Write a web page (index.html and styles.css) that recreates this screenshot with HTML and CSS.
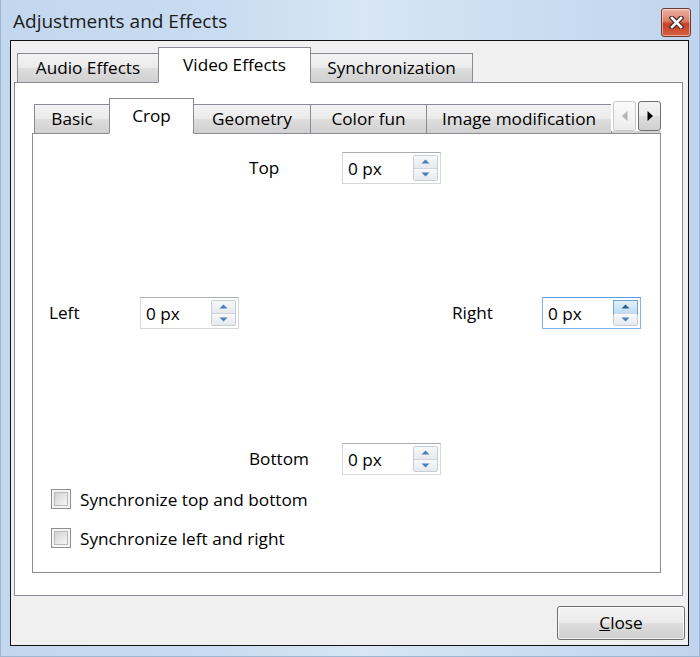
FILE: index.html
```html
<!DOCTYPE html>
<html>
<head>
<meta charset="utf-8">
<title>Adjustments and Effects</title>
<link rel="stylesheet" href="styles.css">
</head>
<body>
<div class="window">
  <div class="titlebar">
    <span class="title">Adjustments and Effects</span>
    <button class="close-x" aria-label="Close">
      <svg width="15" height="13" viewBox="0 0 15 13">
        <path d="M3 2 L12 11 M12 2 L3 11" stroke="#4a2a20" stroke-width="5" stroke-linecap="square"/>
        <path d="M3 2 L12 11 M12 2 L3 11" stroke="#ffffff" stroke-width="2.6" stroke-linecap="square"/>
      </svg>
    </button>
  </div>
  <div class="client">
    <div class="tabwidget outer">
      <div class="tabbar">
        <div class="tab t-audio">Audio Effects</div>
        <div class="tab t-video selected">Video Effects</div>
        <div class="tab t-sync">Synchronization</div>
      </div>
      <div class="pane outer-pane">
        <div class="tabwidget inner">
          <div class="tabbar inner-bar">
            <div class="tab t-basic">Basic</div>
            <div class="tab t-crop selected">Crop</div>
            <div class="tab t-geom">Geometry</div>
            <div class="tab t-color">Color fun</div>
            <div class="tab t-image">Image modification</div>
            <div class="tab t-overlay"></div>
            <div class="scrollers">
              <div class="scroll-btn disabled">
                <svg width="8" height="12" viewBox="0 0 8 12"><path d="M6.5 1 L1 6 L6.5 11 Z" fill="#b3b3b3"/></svg>
              </div>
              <div class="scroll-btn active">
                <svg width="8" height="12" viewBox="0 0 8 12"><path d="M1.5 1 L7 6 L1.5 11 Z" fill="#000"/></svg>
              </div>
            </div>
          </div>
          <div class="pane inner-pane">
            <div class="crop-grid">
              <span class="lbl lbl-top">Top</span>
              <div class="spin s-top">
                <span class="val">0 px</span>
                <div class="spin-btns">
                  <div class="sb up"><svg width="9" height="5" viewBox="0 0 9 5"><path d="M0.5 4.5 L4.5 0.5 L8.5 4.5 Z" fill="#4a7fb8"/></svg></div>
                  <div class="sb down"><svg width="9" height="5" viewBox="0 0 9 5"><path d="M0.5 0.5 L4.5 4.5 L8.5 0.5 Z" fill="#4a7fb8"/></svg></div>
                </div>
              </div>

              <span class="lbl lbl-left">Left</span>
              <div class="spin s-left">
                <span class="val">0 px</span>
                <div class="spin-btns">
                  <div class="sb up"><svg width="9" height="5" viewBox="0 0 9 5"><path d="M0.5 4.5 L4.5 0.5 L8.5 4.5 Z" fill="#4a7fb8"/></svg></div>
                  <div class="sb down"><svg width="9" height="5" viewBox="0 0 9 5"><path d="M0.5 0.5 L4.5 4.5 L8.5 0.5 Z" fill="#4a7fb8"/></svg></div>
                </div>
              </div>
              <span class="lbl lbl-right">Right</span>
              <div class="spin s-right focused">
                <span class="val">0 px</span>
                <div class="spin-btns">
                  <div class="sb up hot"><svg width="9" height="5" viewBox="0 0 9 5"><path d="M0.5 4.5 L4.5 0.5 L8.5 4.5 Z" fill="#2a5c94"/></svg></div>
                  <div class="sb down"><svg width="9" height="5" viewBox="0 0 9 5"><path d="M0.5 0.5 L4.5 4.5 L8.5 0.5 Z" fill="#4a7fb8"/></svg></div>
                </div>
              </div>

              <span class="lbl lbl-bottom">Bottom</span>
              <div class="spin s-bottom">
                <span class="val">0 px</span>
                <div class="spin-btns">
                  <div class="sb up"><svg width="9" height="5" viewBox="0 0 9 5"><path d="M0.5 4.5 L4.5 0.5 L8.5 4.5 Z" fill="#4a7fb8"/></svg></div>
                  <div class="sb down"><svg width="9" height="5" viewBox="0 0 9 5"><path d="M0.5 0.5 L4.5 4.5 L8.5 0.5 Z" fill="#4a7fb8"/></svg></div>
                </div>
              </div>
            </div>
            <div class="checks">
              <label class="check"><span class="box"><span class="box-in"></span></span>Synchronize top and bottom</label>
              <label class="check"><span class="box"><span class="box-in"></span></span>Synchronize left and right</label>
            </div>
          </div>
        </div>
      </div>
    </div>
    <div class="buttons">
      <button class="btn"><u>C</u>lose</button>
    </div>
  </div>
</div>
</body>
</html>
```

FILE: styles.css
```css
* { box-sizing: border-box; }

html, body {
  margin: 0;
  padding: 0;
}

body {
  width: 700px;
  height: 657px;
  overflow: hidden;
  font-family: "Open Sans", "Noto Sans", sans-serif;
  font-size: 17.2px;
  color: #000;
}

.window {
  width: 700px;
  height: 657px;
  background: linear-gradient(to right, #c2d7ee 0%, #c8dbf0 30%, #d8e6f5 52%, #cddff2 70%, #c0d5ed 100%);
  border-left: 1px solid #9db6d2;
  border-right: 1px solid #9db6d2;
  border-bottom: 1px solid #9db6d2;
  display: flex;
  flex-direction: column;
}

.titlebar {
  height: 40px;
  display: flex;
  align-items: center;
  justify-content: space-between;
  padding: 0 8px 0 12px;
  flex: none;
}

.title {
  font-size: 19px;
  color: #1b1b1b;
  margin-top: 1px;
}

.close-x {
  width: 30px;
  height: 29px;
  margin-top: 4px;
  border: 1px solid #6f3b30;
  border-radius: 3px;
  background: linear-gradient(to bottom, #eab2a4 0%, #dc7d67 45%, #c6412a 55%, #d8603f 100%);
  box-shadow: inset 0 0 0 1px rgba(255,255,255,0.45);
  padding: 0;
  display: flex;
  align-items: center;
  justify-content: center;
}

.client {
  margin: 0 10px 10px 9px;
  height: 607px;
  border: 1px solid #111;
  background: #f0f0f0;
  padding: 6px 5px 0 3px;
  display: flex;
  flex-direction: column;
}

/* tab widgets */
.tabwidget { display: flex; flex-direction: column; }

.tabbar {
  display: flex;
  align-items: flex-end;
  padding-left: 3px;
  margin-bottom: -1px;
  position: relative;
  z-index: 1;
}

.tab {
  height: 30px;
  border: 1px solid #898c95;
  background: linear-gradient(to bottom, #f3f3f3 0%, #ebebeb 48%, #dddddd 52%, #d0d0d0 100%);
  display: flex;
  align-items: center;
  justify-content: center;
  white-space: nowrap;
  margin-left: -1px;
  flex: none;
  padding-bottom: 1px;
}

.tab:first-child { margin-left: 0; }

.tab.selected {
  height: 36px;
  background: #fff;
  border-bottom-color: #fff;
  padding-bottom: 2px;
  position: relative;
  z-index: 2;
}

.t-audio { width: 142px; }
.t-video { width: 153px; }
.t-sync { width: 163px; }

.pane {
  border: 1px solid #898c95;
  background: #fff;
}

.outer-pane {
  height: 514px;
  padding: 15px 21px 0 17px;
}

.inner-bar {
  padding-left: 2px;
  overflow: hidden;
}

.t-basic { width: 76px; }
.t-crop { width: 85px; }
.t-geom { width: 118px; }
.t-color { width: 117px; }
.t-image { width: 186px; }
.t-overlay { width: 120px; }

.scrollers {
  position: absolute;
  right: 0;
  top: 3px;
  display: flex;
  gap: 2px;
  background: #fff;
  padding-left: 2px;
}

.scroll-btn {
  width: 23px;
  height: 30px;
  border: 1px solid #c9c9c9;
  border-radius: 3px;
  background: linear-gradient(to bottom, #fbfbfb, #ececec);
  display: flex;
  align-items: center;
  justify-content: center;
}

.scroll-btn.active {
  border-color: #707070;
  background: linear-gradient(to bottom, #f3f3f3 0%, #ebebeb 48%, #dddddd 52%, #cfcfcf 100%);
}

.inner-pane {
  height: 440px;
  padding: 18px 0 0 16px;
}

.crop-grid {
  display: grid;
  grid-template-columns: 91px 100px 102px 100px 100px 99px;
  grid-template-rows: 32px 113px 32px 114px 32px;
  align-items: center;
}

.lbl { line-height: 1; }
.lbl-top { grid-column: 3; grid-row: 1; padding-left: 9px; }
.s-top { grid-column: 4; grid-row: 1; }
.lbl-left { grid-column: 1; grid-row: 3; }
.s-left { grid-column: 2; grid-row: 3; }
.lbl-right { grid-column: 5; grid-row: 3; padding-left: 10px; }
.s-right { grid-column: 6; grid-row: 3; }
.lbl-bottom { grid-column: 3; grid-row: 5; padding-left: 9px; }
.s-bottom { grid-column: 4; grid-row: 5; }

.spin {
  width: 99px;
  height: 32px;
  border: 1px solid #d5d7dc;
  border-top-color: #abadb3;
  background: #fff;
  display: flex;
  align-items: center;
  justify-content: space-between;
  padding: 0 2px 0 5px;
}

.spin.focused {
  border-color: #7eb4ea;
  border-top-color: #569de5;
}

.val { padding-top: 1px; }

.spin-btns {
  width: 25px;
  height: 26px;
  display: flex;
  flex-direction: column;
  border: 1px solid #c8cdd4;
  border-radius: 2px;
}

.sb {
  flex: 1;
  display: flex;
  align-items: center;
  justify-content: center;
  background: linear-gradient(to bottom, #f7f8fa, #e6e9ee);
}

.sb.up { border-bottom: 1px solid #d2d6dc; }

.sb.hot {
  background: linear-gradient(to bottom, #e3f1fb, #bfdcf3);
  outline: 1px solid #6ca6d9;
}

.checks {
  display: flex;
  flex-direction: column;
  gap: 19px;
  margin-top: 14px;
  padding-left: 2px;
}

.check {
  display: flex;
  align-items: center;
  gap: 9px;
  height: 20px;
}

.box {
  width: 20px;
  height: 20px;
  border: 1px solid #8e8f8f;
  background: #f4f4f4;
  padding: 2px;
  flex: none;
}

.box-in {
  display: block;
  width: 100%;
  height: 100%;
  border: 1px solid #b9b9b9;
  background: linear-gradient(135deg, #d2d2d2, #f6f6f6);
}

.buttons {
  display: flex;
  justify-content: flex-end;
  margin: 10px -2px 0 0;
}

.btn {
  width: 128px;
  height: 34px;
  border: 1px solid #707070;
  border-radius: 3px;
  background: linear-gradient(to bottom, #f3f3f3 0%, #ebebeb 48%, #dddddd 52%, #cfcfcf 100%);
  box-shadow: inset 0 0 0 1px rgba(255,255,255,0.7);
  font-family: inherit;
  font-size: 17.2px;
  color: #000;
  padding: 0 0 1px 0;
}
```
